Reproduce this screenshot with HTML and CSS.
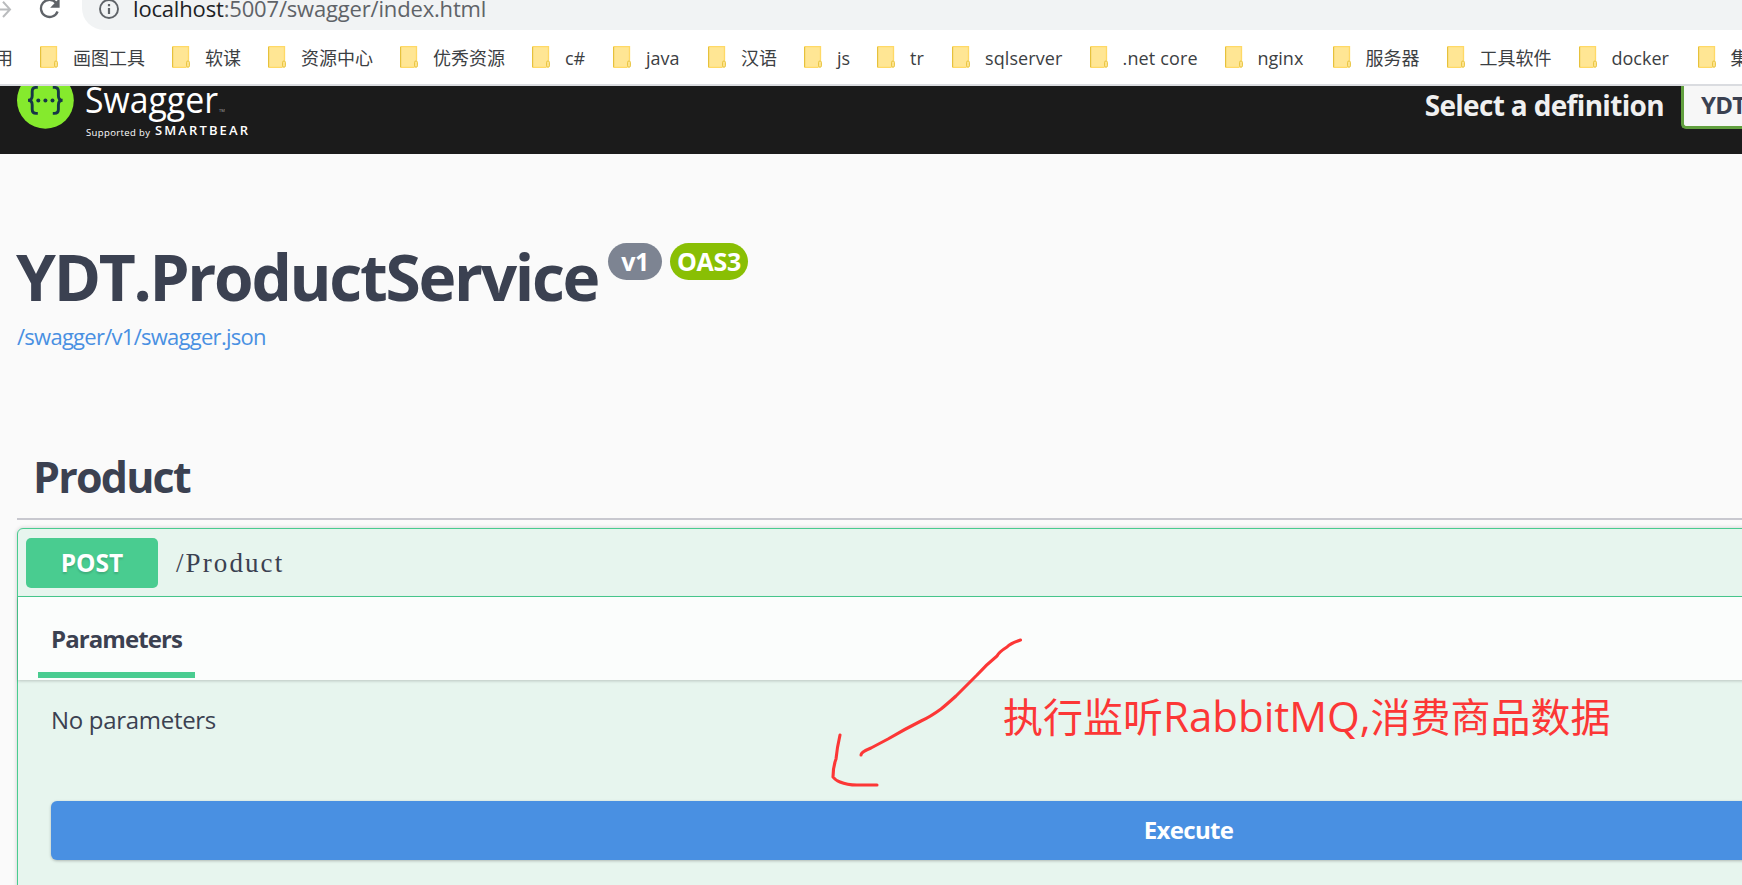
FILE: index.html
```html
<!DOCTYPE html>
<html lang="zh-CN">
<head>
<meta charset="utf-8">
<title>Swagger UI</title>
<link rel="stylesheet" href="styles.css">
</head>
<body>
<svg width="0" height="0" class="defs">
  <symbol id="folder" viewBox="0 0 18 22">
    <path d="M.5.7h16v20.6H.5z" fill="#ffe694"/>
    <path d="M.5.7h16v14M.5 21.3h14" fill="none" stroke="#ffd966" stroke-width="1.3"/>
    <path d="M.6.7v20.6" stroke="#e6c13c" stroke-width="1.2"/>
    <rect x="14.6" y="15" width="2.8" height="6.2" rx="1.3" fill="#ffe694" stroke="#e8c33c"/>
  </symbol>
</svg>
<div class="toolbar">
  <svg class="nav-icons" width="82" height="30" viewBox="0 0 82 30" fill="none">
    <path d="M0 9.400h9M3 1.800l7 7.600-7 7.600" stroke="#babcbe" stroke-width="2"/>
    <path d="M56.200 2.900A8.600 8.600 0 1 0 57.600 11.500" stroke="#5f6368" stroke-width="2.3"/>
    <path d="M59.600-2v9.700h-9.400z" fill="#5f6368"/>
  </svg>
  <div class="omnibox">
    <svg width="22" height="22" viewBox="0 0 22 22"><circle cx="11" cy="11" r="9" fill="none" stroke="#5f6368" stroke-width="1.9"/><path d="M9.900 10h2.200v6H9.900zM9.900 6h2.200v2.200H9.900z" fill="#5f6368"/></svg>
    <span class="url"><b>localhost</b>:5007/swagger/index.html</span>
  </div>
</div>
<div class="bookmarks">
  <span class="apps">用</span>
  <span class="bm w72"><svg><use href="#folder"/></svg>画图工具</span>
  <span class="bm w36"><svg><use href="#folder"/></svg>软谋</span>
  <span class="bm w72"><svg><use href="#folder"/></svg>资源中心</span>
  <span class="bm w72"><svg><use href="#folder"/></svg>优秀资源</span>
  <span class="bm w21"><svg><use href="#folder"/></svg>c#</span>
  <span class="bm w35"><svg><use href="#folder"/></svg>java</span>
  <span class="bm w36"><svg><use href="#folder"/></svg>汉语</span>
  <span class="bm w13"><svg><use href="#folder"/></svg>js</span>
  <span class="bm w15"><svg><use href="#folder"/></svg>tr</span>
  <span class="bm w77"><svg><use href="#folder"/></svg>sqlserver</span>
  <span class="bm w76"><svg><use href="#folder"/></svg>.net core</span>
  <span class="bm w48"><svg><use href="#folder"/></svg>nginx</span>
  <span class="bm w54"><svg><use href="#folder"/></svg>服务器</span>
  <span class="bm w72"><svg><use href="#folder"/></svg>工具软件</span>
  <span class="bm w59"><svg><use href="#folder"/></svg>docker</span>
  <span class="bm last"><svg><use href="#folder"/></svg>集</span>
</div>
<header class="topbar">
  <svg class="logo" width="240" height="68" viewBox="0 0 240 68">
    <circle cx="28.4" cy="14.3" r="28.4" fill="#85ea2d"/>
    <g fill="none" stroke="#173647" stroke-width="2.9">
      <path d="M20.800 1.400h-1.600q-4 0-4 4v4.300q0 4.600-4.200 4.600 4.200 0 4.200 4.600v4.400q0 4.100 4 4.100h1.600"/>
      <path d="M35.800 1.400h1.600q4 0 4 4v4.300q0 4.600 4.200 4.600-4.200 0-4.200 4.600v4.400q0 4.100-4 4.100h-1.600"/>
    </g>
    <g fill="#173647"><circle cx="21.300" cy="14.400" r="2"/><circle cx="28.400" cy="14.400" r="2"/><circle cx="35.500" cy="14.400" r="2"/></g>
    <text class="brand" x="68" y="26.500" textLength="133" lengthAdjust="spacingAndGlyphs">Swagger</text>
    <text class="tm" x="202" y="26">TM</text>
    <text class="support" x="69" y="49.500" textLength="64">Supported by</text>
    <text class="bear" x="138" y="49.300" textLength="93">SMARTBEAR</text>
  </svg>
  <span class="select-label">Select a definition</span>
  <div class="select">YDT.ProductService</div>
</header>
<main class="content">
  <div class="title-row">
    <h1 class="title">YDT.ProductService</h1>
    <span class="pill version">v1</span>
    <span class="pill oas">OAS3</span>
  </div>
  <a class="spec-link">/swagger/v1/swagger.json</a>
  <h2 class="tag">Product</h2>
  <section class="opblock">
    <div class="summary"><span class="method">POST</span><span class="path">/Product</span></div>
    <div class="tabs"><span class="tab">Parameters</span></div>
    <div class="body">
      <p class="none">No parameters</p>
      <div class="execute">Execute</div>
    </div>
  </section>
</main>
<svg class="arrow" width="220" height="170" viewBox="820 630 220 170"><path d="M1020.500 640Q1011 643 1007 647Q999 652 997 656Q987 664 977 675L956 696Q946 705 941 709Q930 717 921 721Q905 729 888 739L871 748Q861 752 861 755M840 735Q837 748 836 759Q833 767 833 777Q835 780 840 782Q847 785 857 785H877" fill="none" stroke="#fc3736" stroke-width="3.1" stroke-linecap="round" stroke-linejoin="round"/></svg>
<div class="note">执行监听<span class="note-latin">RabbitMQ,</span>消费商品数据</div>
</body>
</html>
```
FILE: styles.css
```css
* { box-sizing: border-box; }
html, body { width: 1742px; height: 885px; overflow: hidden; }
body {
  margin: 0;
  position: relative;
  background: #fafafa;
  color: #3b4151;
  font-family: "Open Sans", "Noto Sans CJK SC", sans-serif;
  display: flex;
  flex-direction: column;
}
svg { flex: none; display: block; }
.defs { position: absolute; }

.toolbar { display: flex; height: 30px; background: #fff; flex: none; }
.omnibox {
  flex: 1;
  display: flex;
  align-items: flex-start;
  height: 30px;
  padding-left: 16px;
  overflow: hidden;
  background: #f1f3f4;
  border-bottom-left-radius: 22px;
}
.omnibox svg { margin-top: -2px; }
.url { margin: -7px 0 0 13px; font-size: 22px; line-height: 30px; letter-spacing: -.17px; color: #5f6368; white-space: nowrap; }
.url b { font-weight: 400; color: #202124; }

.bookmarks {
  display: flex;
  flex: none;
  height: 56px;
  padding-top: 16px;
  background: #fff;
  border-bottom: 2px solid #dadce0;
  overflow: hidden;
  font-size: 18px;
  line-height: 24px;
  color: #3c4043;
  white-space: nowrap;
}
.apps { width: 40px; flex: none; text-indent: -5px; }
.bm { display: flex; gap: 15px; flex: none; font-weight: 400; }
.bm svg { width: 18px; height: 22px; }
.w13 { width: 73px; } .w15 { width: 75px; } .w21 { width: 81px; }
.w35 { width: 95px; } .w36 { width: 96px; } .w48 { width: 108px; }
.w54 { width: 114px; } .w59 { width: 119px; } .w72 { width: 132px; }
.w76 { width: 135px; letter-spacing: .15px; } .w77 { width: 137.500px; letter-spacing: .1px; }
.last { width: 60px; }

.topbar {
  display: flex;
  flex: none;
  height: 68px;
  padding-left: 17px;
  overflow: hidden;
  background: #1b1b1b;
  color: #fff;
}
.brand { font-size: 37px; fill: #fff; }
.tm { font-size: 4px; fill: #aaa; }
.support { font-size: 9.500px; fill: #fff; }
.bear { font-size: 13px; font-weight: 600; fill: #fff; }
.select-label { margin: 1px 17px 0 auto; font-size: 28px; line-height: 36px; font-weight: 700; letter-spacing: -.67px; color: #f0f0f0; white-space: nowrap; }
.select {
  flex: none;
  width: 61px;
  height: 53px;
  margin-top: -10px;
  padding: 10px 0 0 17px;
  border: 3px solid #62a03f;
  border-right: 0;
  border-radius: 5px 0 0 5px;
  background: #f7f7f7;
  color: #3b4151;
  font-size: 24px;
  line-height: 32px;
  font-weight: 700;
  letter-spacing: -.8px;
  white-space: nowrap;
  overflow: hidden;
}

.content { flex: 1; padding: 82px 0 0 17px; min-height: 0; }
.title-row { display: flex; align-items: flex-start; height: 86px; }
.title { margin: -2px 12px 0 -1px; width: 580px; font-size: 64px; line-height: 86px; font-weight: 700; letter-spacing: -2.300px; white-space: nowrap; }
.pill { height: 37px; margin: 7px 8px 0 0; border-radius: 19px; color: #fff; font-size: 25px; line-height: 36px; font-weight: 700; text-align: center; }
.version { width: 54px; background: #7d8492; letter-spacing: -.5px; }
.oas { width: 78px; background: #89bf04; letter-spacing: -.3px; }
.spec-link { display: block; height: 30px; margin-top: -1px; font-size: 22px; line-height: 30px; letter-spacing: -.73px; color: #4990e2; }
.tag { margin: 83px 0 8px; height: 86px; padding: 13px 0 0 16px; font-size: 43px; line-height: 60px; letter-spacing: -1.800px; border-bottom: 2px solid #c8c8cf; }
.opblock {
  width: 2344px;
  height: 440px;
  border: 1px solid #49cc90;
  border-radius: 6px;
  background: #e7f5ee;
  box-shadow: 0 0 4px rgba(0, 0, 0, .19);
}
.summary { display: flex; align-items: center; height: 68px; padding: 0 8px; border-bottom: 1px solid #49cc90; }
.method { width: 132px; height: 50px; border-radius: 5px; background: #49cc90; color: #fff; font-size: 24.500px; line-height: 49px; font-weight: 700; text-align: center; text-shadow: 0 2px 2px rgba(0, 0, 0, .15); }
.path { margin: 2px 0 0 18px; font-family: "Liberation Serif", serif; font-size: 27px; letter-spacing: 2.100px; }
.tabs { display: flex; height: 83px; padding-left: 20px; background: #fbfdfc; box-shadow: 0 1px 3px rgba(0, 0, 0, .2); }
.tab { width: 157px; height: 81px; padding: 25px 0 0 13px; border-bottom: 6px solid #49cc90; font-size: 24px; line-height: 34px; font-weight: 700; letter-spacing: -.9px; white-space: nowrap; }
.body { padding: 23px 34px 0 33px; }
.none { margin: 0 0 64px; padding-left: 0; font-size: 24px; line-height: 34px; letter-spacing: -.3px; }
.execute { height: 59px; border-radius: 6px; background: #4990e2; box-shadow: 0 1px 3px rgba(0, 0, 0, .25); color: #fff; font-size: 24px; line-height: 58px; font-weight: 700; letter-spacing: -.7px; text-align: center; }

/* Hand-drawn annotation over the page */
.arrow { position: absolute; left: 820px; top: 630px; }
.note { position: absolute; left: 1003px; top: 685px; font-size: 40px; line-height: 60px; color: #fc3736; white-space: nowrap; font-family: "Noto Sans CJK SC", sans-serif; }
.note-latin { font-family: "Open Sans", sans-serif; font-size: 42px; }
```
